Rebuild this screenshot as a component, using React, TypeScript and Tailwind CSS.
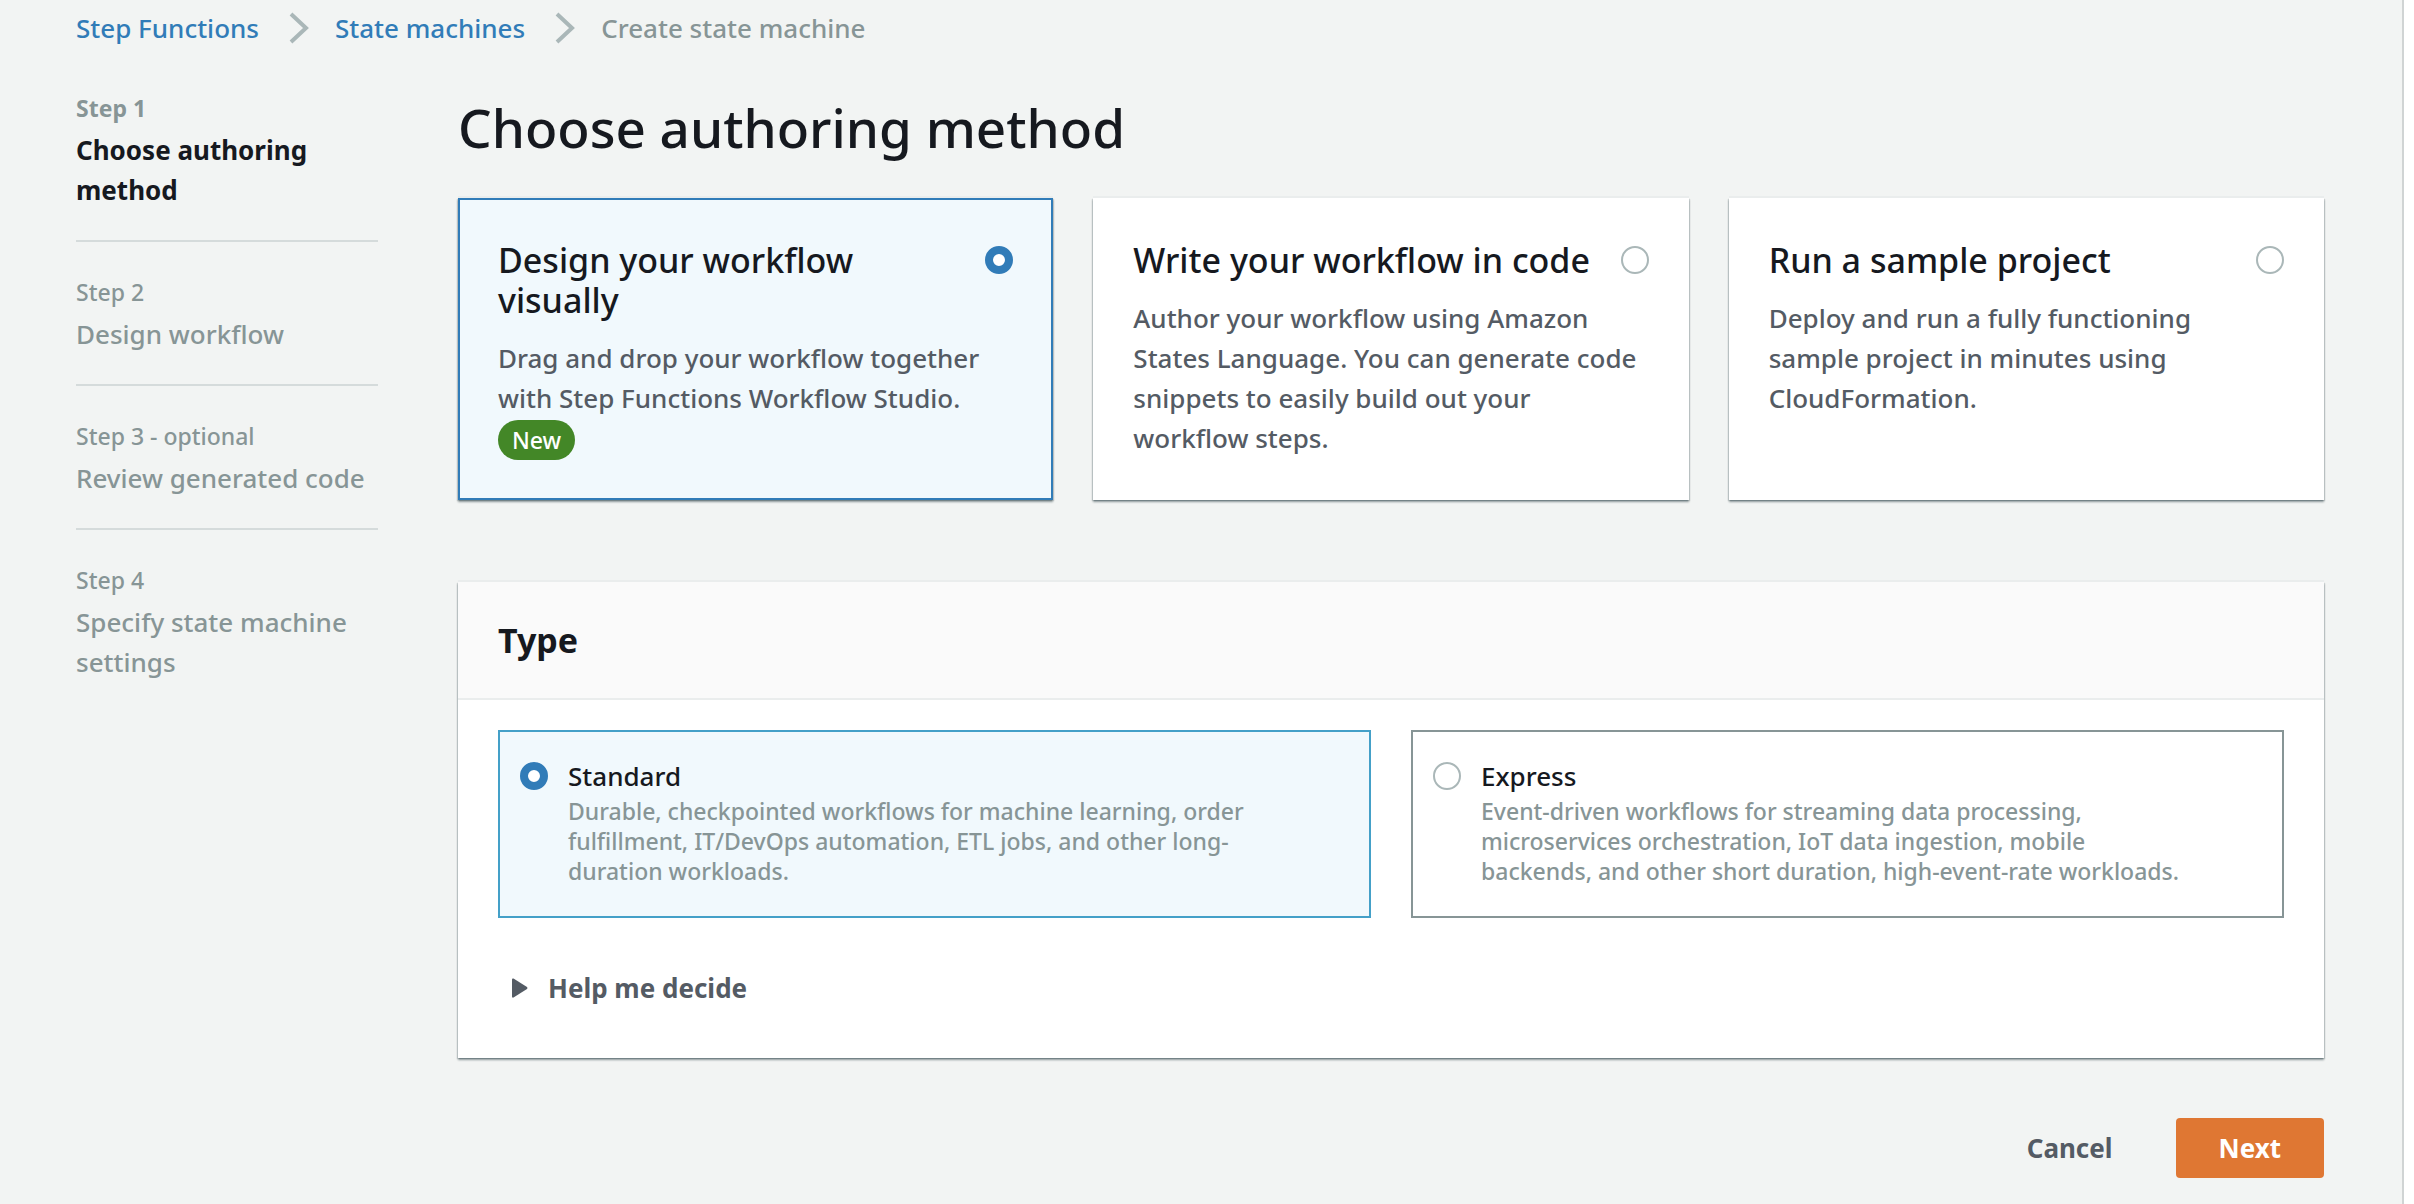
import { useState, type ReactNode } from "react";

const STEPS = [
  { step: "Step 1", title: "Choose authoring method" },
  { step: "Step 2", title: "Design workflow" },
  { step: "Step 3 - optional", title: "Review generated code" },
  { step: "Step 4", title: "Specify state machine settings" },
];

const METHODS = [
  {
    id: "visual",
    title: "Design your workflow visually",
    text: "Drag and drop your workflow together with Step Functions Workflow Studio.",
    isNew: true,
  },
  {
    id: "code",
    title: "Write your workflow in code",
    text: "Author your workflow using Amazon States Language. You can generate code snippets to easily build out your workflow steps.",
    isNew: false,
  },
  {
    id: "sample",
    title: "Run a sample project",
    text: "Deploy and run a fully functioning sample project in minutes using CloudFormation.",
    isNew: false,
  },
];

const TYPES = [
  {
    id: "standard",
    title: "Standard",
    text: "Durable, checkpointed workflows for machine learning, order fulfillment, IT/DevOps automation, ETL jobs, and other long-duration workloads.",
  },
  {
    id: "express",
    title: "Express",
    text: "Event-driven workflows for streaming data processing, microservices orchestration, IoT data ingestion, mobile backends, and other short duration, high-event-rate workloads.",
  },
];

const PANEL_SHADOW =
  "shadow-[0_2px_2px_0_rgba(0,28,36,0.4),1px_1px_1px_0_rgba(0,28,36,0.12),-1px_1px_1px_0_rgba(0,28,36,0.12),0_-2px_0_0_#eaeded]";

function Radio(props: { name: string; id: string; checked: boolean; onChange: () => void }) {
  return (
    <input
      type="radio"
      {...props}
      className="size-7 shrink-0 appearance-none rounded-full border-2 border-[#aab7b8] bg-white checked:border-8 checked:border-[#317cb8]"
    />
  );
}

function Crumb({ children }: { children: ReactNode }) {
  return (
    <li className="flex items-center gap-[30px]">
      <a href="#" className="text-[#317cb8]">
        {children}
      </a>
      <svg className="h-8 w-5" viewBox="0 0 20 32" fill="none" stroke="#aab7b8" strokeWidth="4" aria-hidden="true">
        <path d="M2 2 L17 16 L2 30" />
      </svg>
    </li>
  );
}

export default function App() {
  const [method, setMethod] = useState("visual");
  const [type, setType] = useState("standard");

  return (
    <div className="flex min-h-screen bg-[#f2f4f3] font-['Noto_Sans',sans-serif] text-[26px] leading-10 font-medium text-[#16191f]">
      <div className="min-w-0 flex-1 border-r-2 border-[#d0d4d4] pr-[78px] pl-[76px]">
        <nav aria-label="Breadcrumb" className="pt-2">
          <ol className="flex gap-[26px]">
            <Crumb>Step Functions</Crumb>
            <Crumb>State machines</Crumb>
            <li className="text-[#879596]" aria-current="page">
              Create state machine
            </li>
          </ol>
        </nav>

        <div className="mt-10 flex gap-20">
          <ol className="w-[302px] shrink-0 divide-y-2 divide-[#d5dbdb]">
            {STEPS.map((s, i) => (
              <li
                key={s.step}
                className={i === 0 ? "pb-[30px] font-bold" : "pt-[30px] pb-[30px] text-[#879596]"}
              >
                <div className="text-[23px] text-[#879596]">{s.step}</div>
                <div className="mt-0.5">{s.title}</div>
              </li>
            ))}
          </ol>

          <main className="min-w-0 flex-1">
            <h1 className="pt-2 text-[53px] leading-[64px]">Choose authoring method</h1>

            <div className="mt-[38px] grid grid-cols-3 gap-10">
              {METHODS.map((m) => {
                const on = method === m.id;
                return (
                  <label
                    key={m.id}
                    htmlFor={m.id}
                    className={`block border-2 px-[38px] pt-10 pb-[38px] ${PANEL_SHADOW} ${
                      on ? "border-[#317cb8] bg-[#f1f9fd]" : "border-white bg-white"
                    }`}
                  >
                    <span className="flex items-start gap-6">
                      <span className="flex-1 text-[34px]">{m.title}</span>
                      <span className="flex h-10 items-center">
                        <Radio name="method" id={m.id} checked={on} onChange={() => setMethod(m.id)} />
                      </span>
                    </span>
                    <span className="mt-[18px] block text-[#545b64]">
                      {m.text}
                      {m.isNew && (
                        <span className="mt-0.5 flex">
                          <span className="rounded-full bg-[#438727] px-[14px] text-[23px] text-white">New</span>
                        </span>
                      )}
                    </span>
                  </label>
                );
              })}
            </div>

            <section className={`mt-[82px] bg-white ${PANEL_SHADOW}`}>
              <h2 className="border-b-2 border-[#eaeded] bg-[#fafafa] px-10 py-[38px] text-[34px] font-bold">Type</h2>
              <div className="px-10 pt-[30px] pb-[50px]">
                <div className="grid grid-cols-2 gap-10">
                  {TYPES.map((t) => {
                    const on = type === t.id;
                    return (
                      <label
                        key={t.id}
                        htmlFor={t.id}
                        className={`flex gap-5 border-2 px-5 pt-6 pb-[30px] ${
                          on ? "border-[#44a0c8] bg-[#f1f9fd]" : "border-[#879596] bg-white"
                        }`}
                      >
                        <span className="flex h-10 items-center">
                          <Radio name="type" id={t.id} checked={on} onChange={() => setType(t.id)} />
                        </span>
                        <span className="max-w-[700px]">
                          <span className="block">{t.title}</span>
                          <span className="block text-[23px] leading-[30px] text-[#879596]">{t.text}</span>
                        </span>
                      </label>
                    );
                  })}
                </div>
                <button
                  type="button"
                  aria-expanded="false"
                  className="mt-[50px] ml-[14px] flex items-center gap-5 font-bold text-[#545b64]"
                >
                  <svg className="h-5 w-4" viewBox="0 0 16 20" fill="currentColor" aria-hidden="true">
                    <path d="M0 1.5 Q0 0 1.5 0.5 L15 9 Q16 10 15 11 L1.5 19.5 Q0 20 0 18.5 Z" />
                  </svg>
                  Help me decide
                </button>
              </div>
            </section>

            <div className="mt-[60px] flex justify-end gap-5 font-bold">
              <button type="button" className="h-[60px] px-[43px] text-[#545b64]">
                Cancel
              </button>
              <button type="button" className="h-[60px] rounded-sm bg-[#df7733] px-[43px] text-white">
                Next
              </button>
            </div>
          </main>
        </div>
      </div>
      <div className="w-[10px] bg-white" />
    </div>
  );
}
